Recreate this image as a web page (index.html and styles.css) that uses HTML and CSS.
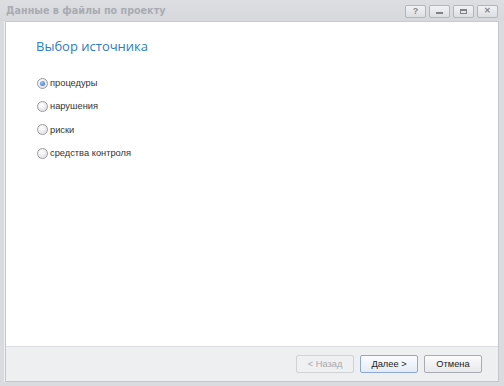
FILE: index.html
```html
<!DOCTYPE html>
<html>
<head>
<meta charset="utf-8">
<link rel="stylesheet" href="styles.css">
</head>
<body>
<div class="window">
  <div class="titlebar">
    <div class="title">Данные в файлы по проекту</div>
    <div class="controls">
      <div class="cbtn">?</div>
      <div class="cbtn"><span class="min"></span></div>
      <div class="cbtn"><span class="max"></span></div>
      <div class="cbtn x">✕</div>
    </div>
  </div>
  <div class="frame">
    <div class="content">
      <h1 class="heading">Выбор источника</h1>
      <div class="options">
        <label class="opt"><span class="radio checked"></span>процедуры</label>
        <label class="opt"><span class="radio"></span>нарушения</label>
        <label class="opt"><span class="radio"></span>риски</label>
        <label class="opt"><span class="radio"></span>средства контроля</label>
      </div>
    </div>
    <div class="footer">
      <div class="btn disabled">&lt; Назад</div>
      <div class="btn primary">Далее &gt;</div>
      <div class="btn">Отмена</div>
    </div>
  </div>
</div>
</body>
</html>
```
FILE: styles.css
```css
html, body { margin: 0; padding: 0; }
body { width: 504px; height: 386px; overflow: hidden; background: #d4d6da; font-family: "Liberation Sans", Arial, sans-serif; }
.window { width: 504px; height: 386px; box-sizing: border-box; background: #d9dbdf; display: flex; flex-direction: column; }
.titlebar { height: 21px; display: flex; align-items: center; justify-content: space-between; padding: 0 6px 0 6px; box-sizing: border-box; background: linear-gradient(#dcdee2, #d6d8dc); }
.title { font-family: "DejaVu Sans", Verdana, sans-serif; font-weight: bold; font-size: 9.6px; color: #a9abb1; letter-spacing: 0; }
.controls { display: flex; gap: 3px; padding-top: 1px; }
.cbtn { width: 21px; height: 13px; box-sizing: border-box; border: 1px solid #b3b5ba; border-radius: 2px; background: linear-gradient(#f1f2f4, #dcdee2); font-size: 9px; font-weight: bold; color: #85878c; display: flex; align-items: center; justify-content: center; line-height: 1; }
.cbtn.x { font-size: 8px; }
.min { width: 7px; height: 2px; background: #7e8085; margin-top: 4px; }
.max { width: 7px; height: 5px; box-sizing: border-box; border: 1px solid #7e8085; border-top-width: 2px; }
.frame { flex: 1; margin: 0 5px 4px 5px; border: 1px solid #c4c6cb; border-top-color: #c8cacf; display: flex; flex-direction: column; background: #fff; box-shadow: -1px 0 0 #eeeff1; }
.content { flex: 1; padding: 15px 0 0 30px; }
.heading { margin: 0; font-family: "Open Sans", "DejaVu Sans", sans-serif; font-weight: normal; font-size: 13px; color: #2c7cc6; letter-spacing: 0; line-height: 18px; }
.options { margin-top: 21px; margin-left: 1px; display: flex; flex-direction: column; gap: 9.4px; }
.opt { display: flex; align-items: center; height: 14px; font-family: "Liberation Sans", Arial, sans-serif; font-size: 9.3px; color: #333; }
.radio { width: 11px; height: 11px; box-sizing: border-box; border-radius: 50%; border: 1px solid #9a9ca2; background: radial-gradient(circle at 40% 35%, #ffffff, #d9dbdf); margin-right: 2px; position: relative; }
.radio.checked::after { content: ""; position: absolute; left: 2px; top: 2px; width: 5px; height: 5px; border-radius: 50%; background: radial-gradient(circle at 40% 35%, #9cc4f0, #2f6fc4); }
.footer { height: 35px; background: #eeeff1; border-top: 1px solid #dcdde1; display: flex; align-items: center; justify-content: flex-end; gap: 6px; padding-right: 16px; box-sizing: border-box; }
.btn { width: 58px; height: 18px; box-sizing: border-box; border: 1px solid #a9abb0; border-radius: 2px; background: linear-gradient(#fbfbfc, #e8e9ec); display: flex; align-items: center; justify-content: center; font-family: "Liberation Sans", Arial, sans-serif; font-size: 9.3px; color: #222; }
.btn.disabled { color: #a6a8ad; border-color: #d0d2d6; background: #eff0f2; }
.btn.primary { border-color: #8ea8d2; background: linear-gradient(#fbfcfe, #e4ebf7); }
```
